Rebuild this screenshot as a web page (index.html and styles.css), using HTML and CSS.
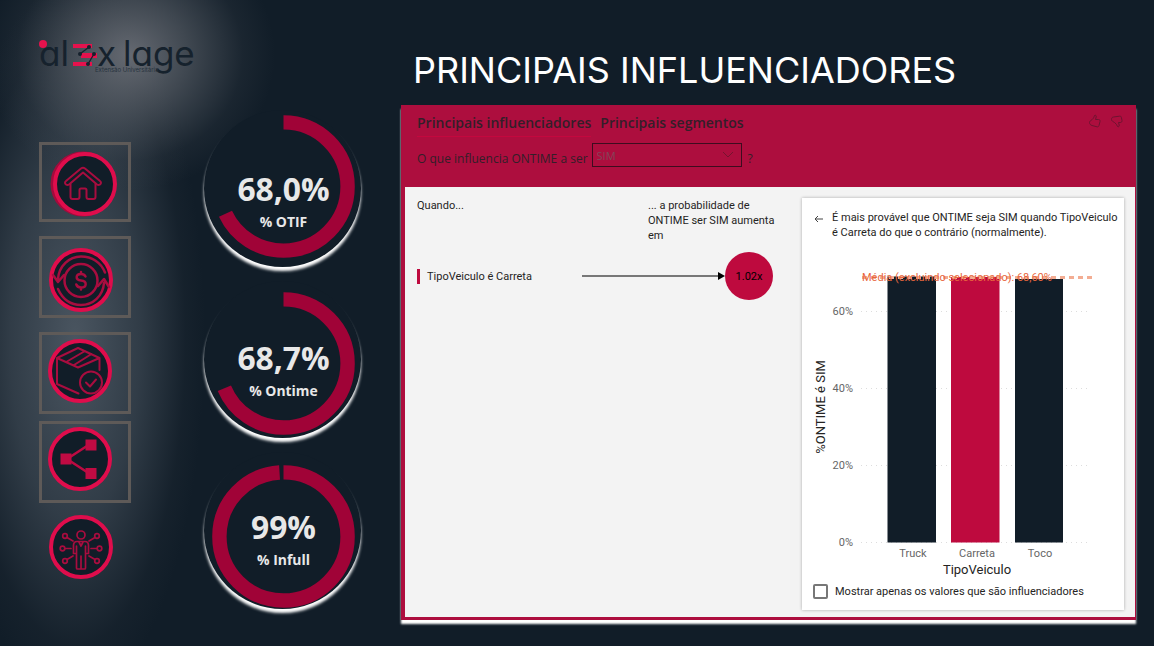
FILE: index.html
```html
<!DOCTYPE html>
<html lang="pt-BR">
<head>
<meta charset="utf-8">
<title>Principais Influenciadores</title>
<link rel="stylesheet" href="styles.css">
</head>
<body>
<div class="dashboard">
  <aside class="sidebar">
    <svg class="logo" viewBox="0 0 160 42" role="img" aria-label="alex lage">
      <g class="logo-word">
        <text x="0" y="29">al</text>
        <text x="58" y="29">x</text>
        <text x="84" y="29">lage</text>
      </g>
      <circle cx="4" cy="7" r="4" fill="#e6124d"/>
      <path d="M34 7h19v4H34zM42 16h16v5H42zM34 25h19v4H34z" fill="#e6124d"/>
      <path d="M50 10l-9 7M55 17l-6 10" stroke="#16222d" stroke-width="1.3"/>
      <g fill="#16222d"><circle cx="50" cy="10" r="2"/><circle cx="41" cy="17" r="2"/><circle cx="55" cy="17" r="2"/><circle cx="49" cy="27" r="2"/></g>
      <text class="logo-tag" x="56" y="35">Extensão Universitária</text>
    </svg>
    <nav class="nav">
      <button class="nav-item home" aria-label="Início">
        <svg viewBox="0 0 68 68">
          <circle cx="33" cy="34" r="30" class="halo"/>
          <circle cx="35" cy="34" r="30" class="disc"/>
          <g class="line" stroke-width="2">
            <path d="M16 34.500q-2-2 0-3.500L31 18.500q2-1.500 4 0L50 31q2 1.500 0 3.500-1.500 1-3 0L33 22.500 19 34.500q-1.500 1-3 0z"/>
            <path d="M20.500 34v13q0 2 2 2h5q2 0 2-2v-7q0-1.500 1.500-1.500h4q1.500 0 1.500 1.500v7q0 2 2 2h5q2 0 2-2V34"/>
          </g>
        </svg>
      </button>
      <button class="nav-item costs" aria-label="Custos">
        <svg viewBox="0 0 64 64">
          <circle cx="32" cy="32" r="30" class="disc"/>
          <g class="line" stroke-width="2.500">
            <circle cx="32" cy="32.500" r="16.500"/>
            <path d="M9 31C10 18 20 8.500 32 8.500c11 0 20 6 24 16M4 27l5 7 6-7M9 41c5 11 13 16 23 16 12 0 22-9 23-22M49 38l6-7 5 8"/>
            <path d="M36.500 28.500c-1-2-2.500-2.500-4.500-2.500-5.500 0-6 6 0 6.500 6.500.5 6 7 0 7-2.500 0-4-1-4.700-3M32 24v2M32 39.500v2"/>
          </g>
        </svg>
      </button>
      <button class="nav-item box" aria-label="Entregas">
        <svg viewBox="0 0 64 64">
          <circle cx="32" cy="32" r="30" class="disc"/>
          <g class="line" stroke-width="2">
            <path d="M30 9L9 19l21 9.500L51.500 19zM9 19V45l21.500 9.500M51.500 19V31M37 12L19 22.500M43.500 15L26 26"/>
            <circle cx="43" cy="43.500" r="11"/><path d="M38 43.500l4 4 6-7"/>
          </g>
        </svg>
      </button>
      <button class="nav-item share" aria-label="Conexões">
        <svg viewBox="0 0 64 64">
          <circle cx="32" cy="32" r="30" class="disc"/>
          <path d="M42 17L19 32l23 15" fill="none" stroke="#bd0b42" stroke-width="2.500"/>
          <path d="M37.500 12.500h11v11h-11zM12.500 26.500h11v11h-11zM37.500 41h11v11h-11z" fill="#c00b43"/>
        </svg>
      </button>
      <button class="nav-item plain" aria-label="Influenciadores">
        <svg viewBox="0 0 64 64">
          <circle cx="32" cy="32" r="30" class="disc"/>
          <g class="line" stroke-width="1.700">
            <circle cx="32" cy="20" r="4"/>
            <path d="M28 26.500h8c2 0 3.500 1.500 3.500 4v8h-3V53q0 1-1 1h-7q-1 0-1-1V38.500h-3v-8c0-2.500 1.500-4 3.500-4zM27.500 31v8M36.500 31v8M32 41v13M30 27l2 4 2-4"/>
            <circle cx="16" cy="21" r="2.300"/><circle cx="13.500" cy="33.500" r="2.300"/><circle cx="16" cy="46" r="2.300"/>
            <circle cx="48" cy="21" r="2.300"/><circle cx="50.500" cy="33.500" r="2.300"/><circle cx="48" cy="46" r="2.300"/>
            <path d="M18 22.500l6 3.500M16 33.500h6M18 44.500l6-3.500M46 22.500L40 26M48 33.500h-6M46 44.500L40 41"/>
          </g>
        </svg>
      </button>
    </nav>
  </aside>

  <section class="kpis" aria-label="Indicadores">
    <div class="kpi">
      <svg viewBox="0 0 158 158">
        <circle cx="80" cy="77" r="64.500" pathLength="100" class="arc" stroke-dasharray="68 32" transform="rotate(-90 80 77)"/>
        <text x="80" y="92" class="kpi-value">68,0%</text>
        <text x="80" y="118" class="kpi-name">% OTIF</text>
      </svg>
    </div>
    <div class="kpi">
      <svg viewBox="0 0 158 158">
        <circle cx="80" cy="83" r="64.500" pathLength="100" class="arc" stroke-dasharray="68.700 31.300" transform="rotate(-90 80 83)"/>
        <text x="80" y="90" class="kpi-value">68,7%</text>
        <text x="80" y="116" class="kpi-name">% Ontime</text>
      </svg>
    </div>
    <div class="kpi">
      <svg viewBox="0 0 158 158">
        <circle cx="80" cy="85" r="64.500" pathLength="100" class="arc" stroke-dasharray="99 1" transform="rotate(-90 80 85)"/>
        <text x="80" y="88" class="kpi-value">99%</text>
        <text x="80" y="114" class="kpi-name">% Infull</text>
      </svg>
    </div>
  </section>

  <main class="main">
    <h1>PRINCIPAIS INFLUENCIADORES</h1>
    <section class="panel">
      <header class="panel-head">
        <div class="tabs">
          <button class="tab active">Principais influenciadores</button>
          <button class="tab">Principais segmentos</button>
          <div class="votes">
            <button aria-label="Gostei"><svg viewBox="0 0 14 14"><path d="M6.500 1.500c1-.8 2 .2 1.700 1.500L7.500 5.500h3c1.300 0 1.800 1 1.500 2l-1 4c-.3 1.200-1 1.500-2 1.300L4 11.500C2.500 11 1.500 10 1.500 8.500S3 6.500 4.200 5.500C5.500 4.500 6 3 6.500 1.500z"/></svg></button>
            <button aria-label="Não gostei"><svg viewBox="0 0 14 14"><path d="M7.500 12.500c1 .8 2-.2 1.700-1.500L8.500 8.500h1.800c1.300 0 1.800-1 1.700-2l-.6-3c-.3-1.200-1-1.500-2-1.300L3.500 3C2 3.300 1.500 4 1.500 5.500S3 7.500 4.500 8.500C6 9.500 7 11 7.500 12.500z"/></svg></button>
          </div>
        </div>
        <div class="question">
          <label for="target">O que influencia ONTIME a ser</label>
          <span class="select-wrap">
            <select id="target"><option>SIM</option></select>
            <svg viewBox="0 0 12 8"><path d="M1 1l5 5 5-5"/></svg>
          </span>
          <span class="mark">?</span>
        </div>
      </header>
      <div class="panel-body">
        <div class="influencers">
          <div class="list-head">
            <p>Quando...</p>
            <p>... a probabilidade de<br>ONTIME ser SIM aumenta<br>em</p>
          </div>
          <div class="influencer">
            <span class="influencer-name">TipoVeiculo é Carreta</span>
            <svg class="arrow" viewBox="0 0 143 8"><path d="M0 4h138" stroke="#777" stroke-width="2"/><path d="M136 0l7 4-7 4z"/></svg>
            <span class="bubble">1.02x</span>
          </div>
        </div>
        <article class="detail">
          <div class="detail-head">
            <button class="back" aria-label="Voltar"><svg viewBox="0 0 10 8"><path d="M9 4H1M4 1L1 4l3 3"/></svg></button>
            <p>É mais provável que ONTIME seja SIM quando TipoVeiculo<br>é Carreta do que o contrário (normalmente).</p>
          </div>
          <svg class="chart" viewBox="0 0 322 340" role="img" aria-label="%ONTIME é SIM por TipoVeiculo">
            <g class="grid"><path d="M59 71.500h230M59 148.500h230M59 225.500h230M59 302.500h230"/></g>
            <g class="tick end"><text x="51" y="75">60%</text><text x="51" y="152">40%</text><text x="51" y="229">20%</text><text x="51" y="306">0%</text></g>
            <g fill="#111d28"><rect x="85.500" y="36.500" width="48.500" height="266"/><rect x="213" y="39" width="48" height="263.500"/></g>
            <rect x="149" y="37" width="48.500" height="265.500" fill="#be0a3e"/>
            <path class="mean" d="M60 37.500h230"/>
            <text class="mean-label" x="60" y="41">Média (excluindo selecionado): 68,60%</text>
            <g class="tick mid"><text x="111" y="317">Truck</text><text x="175" y="317">Carreta</text><text x="238" y="317">Toco</text></g>
            <text class="axis" x="175" y="334">TipoVeiculo</text>
            <text class="axis" transform="translate(23 167) rotate(-90)">%ONTIME é SIM</text>
          </svg>
          <label class="only"><input type="checkbox"><span>Mostrar apenas os valores que são influenciadores</span></label>
        </article>
      </div>
    </section>
  </main>
</div>
</body>
</html>
```
FILE: styles.css
```css
* { box-sizing: border-box; }
body {
  margin: 0;
  font: 11px/15px Roboto, "Noto Sans", sans-serif;
  color: #252423;
  background: #111d28;
}
p, h1 { margin: 0; }
svg { display: block; }
button { padding: 0; border: 0; background: none; color: inherit; font: inherit; cursor: pointer; }

.dashboard {
  display: grid;
  grid-template-columns: 204px 157px 1fr;
  min-height: 100vh;
  background:
    radial-gradient(ellipse 145px 135px at 130px 55px, rgba(128, 130, 137, .75), rgba(110, 114, 121, .5) 40%, rgba(80, 86, 94, .15) 78%, transparent),
    radial-gradient(ellipse 130px 360px at 75px 340px, rgba(84, 95, 106, .85), rgba(70, 81, 92, .6) 50%, rgba(40, 50, 60, .2) 85%, transparent),
    #111d28;
}

.sidebar { padding: 37px 0 0 39px; }
.logo { width: 160px; height: 42px; overflow: visible; }
.logo-word { font: 400 35px Inter, sans-serif; font-feature-settings: "cv11"; fill: #16222d; }
.logo-tag { font: 6px Inter, sans-serif; fill: #26323d; }
.nav { display: flex; flex-direction: column; width: 92px; margin-top: 63px; }
.nav-item { display: flex; align-items: flex-start; height: 82px; margin-bottom: 14px; border: 3px solid #5e5a58; }
.nav-item svg { width: 64px; height: 64px; }
.nav-item.home { height: 80px; padding: 5px 0 0 8px; }
.nav-item.home svg { width: 68px; height: 68px; }
.nav-item.costs { padding: 9px 0 0 7px; }
.nav-item.box { margin-bottom: 7px; padding: 4px 0 0 6px; }
.nav-item.share { margin-bottom: 12px; padding: 3px 0 0 6px; }
.nav-item.plain { height: 64px; margin: 0; padding-left: 10px; border: 0; }
.disc { fill: #111d28; stroke: #df0d4c; stroke-width: 4; }
.halo { fill: none; stroke: #a30b3c; stroke-width: 5; }
.line { fill: none; stroke: #a80d3f; stroke-linecap: round; stroke-linejoin: round; }

.kpis { display: flex; flex-direction: column; gap: 14px; padding-top: 110px; }
.kpi { aspect-ratio: 1; border-radius: 50%; background: #111d28; box-shadow: 0 4px 3px #fff; }
.kpi svg { overflow: visible; }
.arc { fill: none; stroke: #a00337; stroke-width: 14.5; }
.kpi-value, .kpi-name { fill: #e8e8e8; font-family: "Open Sans", sans-serif; font-weight: 700; text-anchor: middle; }
.kpi-value { font-size: 32px; }
.kpi-name { font-size: 14px; }

.main { display: flex; flex-direction: column; padding: 45px 18px 26px 40px; }
h1 { padding: 0 0 10px 12px; font: 400 36px/50px Inter, sans-serif; color: #fff; white-space: nowrap; }
.panel {
  flex: 1;
  display: flex;
  flex-direction: column;
  padding: 0 1px 3px 4px;
  background: #ad0e3e;
  box-shadow: 0 4px 2px #fff;
}
.panel-head { height: 82px; padding: 8px 11px 0 12px; color: #331f29; font-family: "Open Sans", sans-serif; }
.tabs { display: flex; gap: 9px; height: 24px; }
.tab { height: 24px; padding-bottom: 4px; font-size: 14px; font-weight: 600; line-height: 20px; border-bottom: 1px solid transparent; }
.tab.active { border-color: #c4083e; }
.votes { display: flex; gap: 8px; height: 16px; margin-left: auto; }
.votes svg { width: 14px; height: 14px; fill: none; stroke: #6d1430; }
.question { display: flex; align-items: center; gap: 4px; margin-top: 6px; font-size: 12px; }
.question label, .mark { padding-top: 6px; }
.mark { margin-left: 2px; }
.select-wrap { display: grid; grid-template-columns: 1fr 20px; align-items: center; width: 150px; height: 24px; }
.select-wrap select {
  grid-area: 1 / 1 / 2 / 3;
  width: 100%;
  height: 24px;
  padding: 0 4px;
  appearance: none;
  border: 1px solid #3d0c1f;
  border-radius: 0;
  background: none;
  color: #84455a;
  font: 11px "Open Sans", sans-serif;
}
.select-wrap svg { grid-area: 1 / 2; width: 12px; height: 8px; fill: none; stroke: #75142f; pointer-events: none; }

.panel-body {
  flex: 1;
  display: grid;
  grid-template-columns: 1fr 322px;
  gap: 29px;
  padding: 11px 11px 7px 12px;
  background: #f3f3f3;
}
.list-head { display: grid; grid-template-columns: 1fr 125px; white-space: nowrap; }
.influencer { display: grid; grid-template-columns: 1fr 143px 48px; align-items: center; margin-top: 9px; }
.influencer-name { padding-left: 7px; border-left: 3px solid #be0a3e; }
.arrow { width: 100%; }
.bubble { display: grid; place-items: center; height: 48px; border-radius: 50%; background: #be0a3e; color: #000; }
.detail { display: flex; flex-direction: column; background: #fff; box-shadow: 0 0 3px rgba(0, 0, 0, .3); }
.detail-head { display: flex; gap: 8px; padding: 12px 0 0 12px; white-space: nowrap; }
.back { align-self: flex-start; padding-top: 5px; }
.back svg { width: 10px; height: 8px; fill: none; stroke: #444; }
.chart { width: 100%; }
.grid { fill: none; stroke: #ddd; stroke-dasharray: 1 4; }
.tick { fill: #666; }
.end { text-anchor: end; }
.mid, .axis { text-anchor: middle; }
.axis { font-size: 13px; fill: #252423; }
.mean { stroke: #f3ad93; stroke-width: 3; stroke-dasharray: 5 4; }
.mean-label { fill: #e8663d; }
.only { display: flex; align-items: center; gap: 7px; margin: 4px 0 0 11px; white-space: nowrap; }
.only input { width: 15px; height: 15px; margin: 0; appearance: none; border: 2px solid #777; border-radius: 2px; background: #fff; }
```
